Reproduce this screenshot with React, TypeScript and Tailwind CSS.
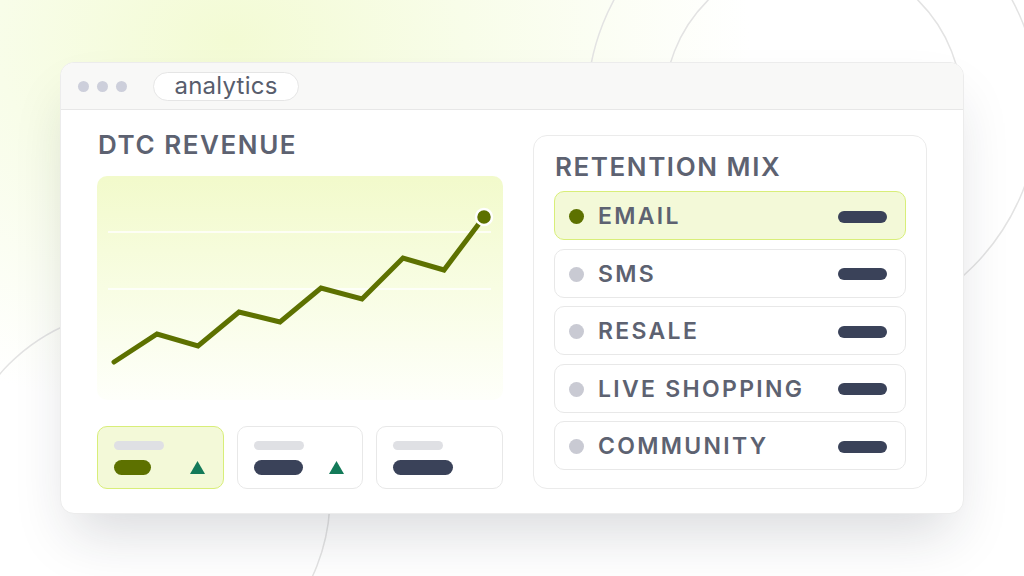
import React from 'react';

const CHANNELS = [
  { label: 'EMAIL', active: true },
  { label: 'SMS', active: false },
  { label: 'RESALE', active: false },
  { label: 'LIVE SHOPPING', active: false },
  { label: 'COMMUNITY', active: false },
];

const POINTS: [number, number][] = [
  [17, 186], [60, 158], [101, 170], [142, 136], [183, 146],
  [224, 112], [265, 123], [306, 82], [347, 94], [387, 41],
];

function Backdrop() {
  return (
    <svg className="absolute inset-0" width="1024" height="576" viewBox="0 0 1024 576" fill="none">
      <circle cx="813" cy="107" r="226" stroke="#e3e3e3" strokeWidth="1.5" />
      <circle cx="813" cy="106" r="149" stroke="#e3e3e3" strokeWidth="1.5" />
      <circle cx="142" cy="497" r="188" stroke="#e3e3e3" strokeWidth="1.5" />
    </svg>
  );
}

function Up() {
  return (
    <svg width="15" height="13" viewBox="0 0 15 13">
      <polygon points="7.5,0 15,13 0,13" fill="#137a59" />
    </svg>
  );
}

function RevenueChart() {
  const d = POINTS.map(([x, y], i) => `${i ? 'L' : 'M'}${x} ${y}`).join(' ');
  const [lx, ly] = POINTS[POINTS.length - 1];
  return (
    <div className="h-[224px] shrink-0 rounded-[10px] bg-gradient-to-b from-[#f2facb] via-[#f8fde3] to-[#fefffa]">
      <svg width="406" height="224" viewBox="0 0 406 224" fill="none">
        <line x1="11" y1="56" x2="394" y2="56" stroke="#ffffff" strokeWidth="1.5" />
        <line x1="11" y1="113" x2="394" y2="113" stroke="#ffffff" strokeWidth="1.5" />
        <path d={d} stroke="#5d7100" strokeWidth="5" strokeLinecap="round" strokeLinejoin="miter" />
        <circle cx={lx} cy={ly} r="8" fill="#5d7100" stroke="#ffffff" strokeWidth="2.5" />
      </svg>
    </div>
  );
}

function StatCard({ active, bar, up }: { active?: boolean; bar: number; up?: boolean }) {
  return (
    <div
      className={`flex h-[63px] flex-col rounded-[10px] border pl-4 pr-[18px] pt-[14px] ${
        active ? 'border-[#d8ee79] bg-[#f3f9d8]' : 'border-[#e8e8e8] bg-white'
      }`}
    >
      <div className="h-[9px] w-[50px] rounded-full bg-[#dfe0e4]" />
      <div className="mt-[10px] flex items-center justify-between">
        <div
          className={`h-[15px] rounded-full ${active ? 'bg-[#5d7100]' : 'bg-[#3a4259]'}`}
          style={{ width: bar }}
        />
        {up && <Up />}
      </div>
    </div>
  );
}

export default function App() {
  return (
    <div className="relative h-[576px] w-[1024px] overflow-hidden bg-white bg-[radial-gradient(ellipse_520px_380px_at_230px_40px,#f3fbd4_0%,#f8fde9_45%,#ffffff_100%)] font-['Inter',sans-serif]">
      <Backdrop />
      <div className="relative pl-[60px] pt-[62px]">
        <div className="flex h-[452px] w-[904px] flex-col overflow-hidden rounded-[14px] border border-[#ececec] bg-white shadow-[0_30px_56px_-12px_rgba(30,35,55,0.17)]">
          {/* title bar */}
          <div className="flex h-[47px] shrink-0 items-center border-b border-[#e7e7e7] bg-[#f8f8f7] pl-[17px]">
            <div className="flex gap-[8px]">
              <span className="h-[11px] w-[11px] rounded-full bg-[#cdcfdb]" />
              <span className="h-[11px] w-[11px] rounded-full bg-[#cdcfdb]" />
              <span className="h-[11px] w-[11px] rounded-full bg-[#cdcfdb]" />
            </div>
            <div className="ml-[26px] flex h-[29px] w-[146px] items-center justify-center rounded-full border border-[#e5e5e5] bg-white text-[24px] leading-none tracking-[0.01em] text-[#585d6c]">
              analytics
            </div>
          </div>

          {/* body */}
          <div className="flex flex-1 gap-[30px] px-[36px] pb-[24px] pt-[22px]">
            <div className="flex w-[406px] flex-col">
              <h2 className="mb-[18px] pl-[1px] text-[26px] font-semibold leading-none tracking-[0.06em] text-[#5d6271]">
                DTC REVENUE
              </h2>
              <RevenueChart />
              <div className="mt-[26px] grid grid-cols-3 gap-[13px]">
                <StatCard active bar={37} up />
                <StatCard bar={49} up />
                <StatCard bar={60} />
              </div>
            </div>

            <div className="mt-[3px] flex flex-1 flex-col rounded-[14px] border border-[#ebebeb] px-[20px] pb-[17px] pt-[18px]">
              <h2 className="mb-[11px] pl-[1px] text-[26px] font-semibold leading-none tracking-[0.06em] text-[#5d6271]">
                RETENTION MIX
              </h2>
              <div className="flex flex-col gap-[8.5px]">
                {CHANNELS.map((c) => (
                  <div
                    key={c.label}
                    className={`flex h-[49px] items-center rounded-[10px] border pl-[14px] pr-[18px] pt-[2px] ${
                      c.active ? 'border-[#d8ee79] bg-[#f3f9d8]' : 'border-[#e8e8e8] bg-white'
                    }`}
                  >
                    <span
                      className={`h-[15px] w-[15px] rounded-full ${c.active ? 'bg-[#5d7100]' : 'bg-[#c9cad3]'}`}
                    />
                    <span className="ml-[14px] flex-1 text-[23px] font-semibold leading-none tracking-[0.1em] text-[#5d6271]">
                      {c.label}
                    </span>
                    <span className="h-[12px] w-[49px] rounded-full bg-[#3a4259]" />
                  </div>
                ))}
              </div>
            </div>
          </div>
        </div>
      </div>
    </div>
  );
}
